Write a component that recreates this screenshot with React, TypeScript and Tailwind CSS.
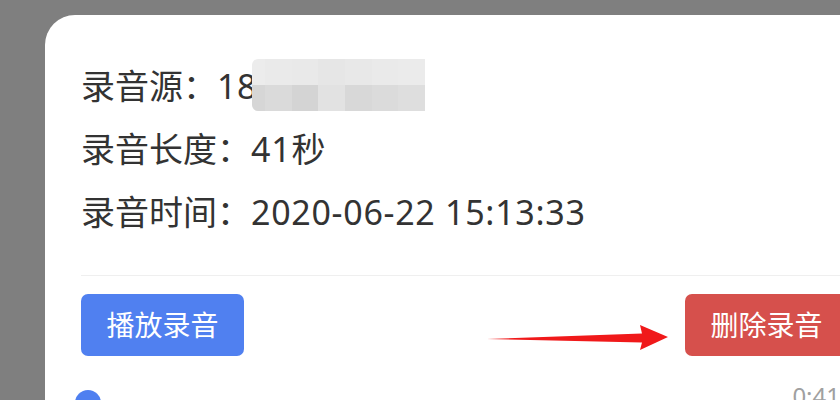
import React from 'react';

const mosaicTop = ['#ececec', '#eaeaea', '#e9e9e9', '#e6e6e6', '#e8e8e8', '#eaeaea', '#ebebeb'];
const mosaicBottom = ['#d6d6d6', '#dadada', '#d4d4d4', '#e2e2e2', '#d8d8d8', '#dbdbdb', '#dedede'];
const mosaicWidths = [13, 27, 26, 27, 27, 26, 27];

function Mosaic() {
  return (
    <div className="ml-[-5px] mt-[-3px] flex flex-col overflow-hidden rounded-l-[6px]">
      {[mosaicTop, mosaicBottom].map((row, r) => (
        <div key={r} className="flex h-[26px]">
          {row.map((c, i) => (
            <div key={i} className="h-full" style={{ width: mosaicWidths[i], backgroundColor: c }} />
          ))}
        </div>
      ))}
    </div>
  );
}

function Arrow() {
  return (
    <svg className="absolute left-[442px] top-[306px]" width="190" height="40" viewBox="0 0 190 40">
      <path d="M0 18 L155 12.5 L153 4 L181 16 L153 29 L155 21.5 Z" fill="#f0191a" />
    </svg>
  );
}

export default function App() {
  return (
    <div
      className="h-[400px] w-[840px] overflow-hidden bg-[#7f7f7f] pl-[45px] pt-[15px]"
      style={{ fontFamily: '"Noto Sans", "Noto Sans CJK SC", sans-serif' }}
    >
      <div className="relative h-[420px] w-[839px] rounded-tl-[30px] rounded-tr-[30px] bg-white px-[36px] pt-[40px] text-[#333333]">
        <div className="flex h-[63px] items-center text-[34px]">
          <span>录音源：</span>
          <span className="tracking-[0.6px]">18</span>
          <Mosaic />
        </div>
        <div className="flex h-[63px] items-center text-[34px]">
          <span>录音长度：</span>
          <span className="tracking-[0.8px]">41秒</span>
        </div>
        <div className="flex h-[63px] items-center text-[34px]">
          <span>录音时间：</span>
          <span className="tracking-[0.7px]">2020-06-22 15:13:33</span>
        </div>

        <div className="mt-[31px] border-t border-[#efefef]" />

        <div className="mt-[18px] flex justify-between">
          <button className="h-[62px] w-[163px] rounded-[7px] bg-[#5080f0] text-[28px] text-white">
            播放录音
          </button>
          <button className="h-[62px] w-[163px] rounded-[7px] bg-[#d6504c] text-[28px] text-white">
            删除录音
          </button>
        </div>

        <div className="flex items-start justify-between">
          <div className="ml-[-6px] mt-[34px] h-[26px] w-[26px] rounded-full bg-[#4e7ff0]" />
          <span className="mr-[8px] mt-[22px] text-[24px] text-[#a0a0a0]">0:41</span>
        </div>

        <Arrow />
      </div>
    </div>
  );
}
